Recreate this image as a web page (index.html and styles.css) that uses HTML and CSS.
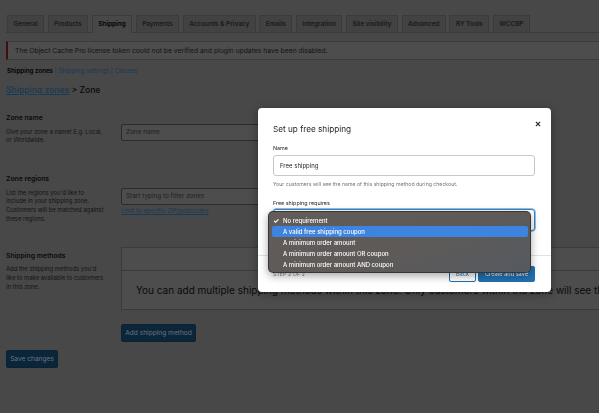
FILE: index.html
```html
<!DOCTYPE html>
<html lang="en">
<head>
<meta charset="utf-8">
<title>Shipping zones</title>
<link rel="stylesheet" href="styles.css">
</head>
<body>
<div class="page">
<div class="wrap">
  <nav class="tabs">
    <a class="tab">General</a>
    <a class="tab">Products</a>
    <a class="tab active">Shipping</a>
    <a class="tab">Payments</a>
    <a class="tab">Accounts &amp; Privacy</a>
    <a class="tab">Emails</a>
    <a class="tab">Integration</a>
    <a class="tab">Site visibility</a>
    <a class="tab">Advanced</a>
    <a class="tab">RY Tools</a>
    <a class="tab">WCCBP</a>
  </nav>

  <div class="notice">The Object Cache Pro license token could not be verified and plugin updates have been disabled.</div>

  <div class="subnav"><b>Shipping zones</b> <span class="sep">|</span> <a>Shipping settings</a> <span class="sep">|</span> <a>Classes</a></div>

  <h2 class="crumbs"><a>Shipping zones</a> &gt; Zone</h2>

  <div class="form">
    <div class="row row-name">
      <div class="th">
        <div class="label">Zone name</div>
        <p class="desc">Give your zone a name! E.g. Local,<br>or Worldwide.</p>
      </div>
      <div class="td">
        <div class="input">Zone name</div>
      </div>
    </div>

    <div class="row row-regions">
      <div class="th">
        <div class="label">Zone regions</div>
        <p class="desc">List the regions you'd like to<br>include in your shipping zone.<br>Customers will be matched against<br>these regions.</p>
      </div>
      <div class="td">
        <div class="input">Start typing to filter zones</div>
        <a class="limit">Limit to specific ZIP/postcodes</a>
      </div>
    </div>

    <div class="row row-methods">
      <div class="th">
        <div class="label">Shipping methods</div>
        <p class="desc">Add the shipping methods you'd<br>like to make available to customers<br>in this zone.</p>
      </div>
      <div class="td">
        <div class="methods">
          <div class="methods-head"></div>
          <div class="methods-body">You can add multiple shipping methods within this zone. Only customers within the zone will see them.</div>
        </div>
        <button class="btn-primary add">Add shipping method</button>
      </div>
    </div>
  </div>

  <button class="btn-primary save">Save changes</button>
</div>
</div>

<div class="modal">
  <header class="modal-head">
    <h1 class="modal-title">Set up free shipping</h1>
    <button class="close" aria-label="Close">
      <svg viewBox="0 0 10 10" width="6" height="6"><path d="M1.5 1.5 L8.5 8.5 M8.5 1.5 L1.5 8.5" stroke="#1e1e1e" stroke-width="1.8" fill="none"/></svg>
    </button>
  </header>
  <div class="modal-body">
    <div class="m-label">Name</div>
    <div class="m-input">Free shipping</div>
    <div class="m-help">Your customers will see the name of this shipping method during checkout.</div>
    <div class="m-label m-label-2">Free shipping requires</div>
    <div class="m-select">
      <ul class="menu">
        <li class="opt checked"><span class="check">✓</span>No requirement</li>
        <li class="opt hl">A valid free shipping coupon</li>
        <li class="opt">A minimum order amount</li>
        <li class="opt">A minimum order amount OR coupon</li>
        <li class="opt">A minimum order amount AND coupon</li>
      </ul>
    </div>
  </div>
  <footer class="modal-foot">
    <span class="step">Step 2 of 2</span>
    <div class="actions">
      <button class="btn-back">Back</button>
      <button class="btn-create">Create and save</button>
    </div>
  </footer>
</div>
</body>
</html>
```

FILE: styles.css
```css
/* The settings page sits behind a 70% black modal backdrop,
   so every page colour below is the dimmed (x0.3) value. */
html, body {
  margin: 0;
  padding: 0;
  background-color: #484848;
}
body {
  font-family: Inter, "Noto Sans", sans-serif;
  color: #090b0c;
}
.page {
  width: 599px;
  height: 413px;
  overflow: hidden;
  background-color: #484848;
}
.wrap {
  width: 660px;
  padding-left: 6px;
  padding-top: 15px;
}

/* tabs */
.tabs {
  display: flex;
  gap: 3.5px;
  border-bottom: 1px solid #3b3b3c;
  height: 17px;
  padding-left: 1px;
}
.tab {
  display: block;
  height: 16px;
  line-height: 16px;
  padding: 0 5.5px;
  background-color: #424243;
  border: 1px solid #3b3b3c;
  border-bottom: none;
  font-size: 6.4px;
  font-weight: 600;
  color: #181a1c;
  white-space: nowrap;
}
.tab.active {
  background-color: #484848;
  color: #000;
  height: 17px;
  margin-bottom: -1px;
}

/* notice */
.notice {
  margin-top: 8px;
  height: 17px;
  line-height: 17px;
  background-color: #4d4d4d;
  border: 1px solid #3b3b3c;
  border-left: 2px solid #401011;
  padding-left: 7px;
  font-size: 6.8px;
  color: #121416;
  white-space: nowrap;
}

.subnav {
  margin-top: 6px;
  line-height: 10px;
  font-size: 6.2px;
  color: #181a1c;
  padding-left: 1px;
}
.subnav b { color: #000; font-weight: 600; }
.subnav a { color: #163a58; }
.subnav .sep { color: #323334; }

.crumbs {
  margin: 8px 0 0;
  font-size: 8.6px;
  line-height: 12px;
  font-weight: 500;
  color: #090b0c;
}
.crumbs a { color: #163a58; text-decoration: underline; }

/* form */
.form { margin-top: 17px; }
.row { display: flex; }
.th { width: 115px; flex: none; }
.td { flex: 1; }
.label {
  font-size: 6.8px;
  font-weight: 600;
  line-height: 10px;
  color: #090b0c;
}
.desc {
  margin: 4.5px 0 0;
  font-size: 5.9px;
  line-height: 8.8px;
  color: #121416;
  white-space: nowrap;
}
.input {
  width: 270px;
  height: 17px;
  box-sizing: border-box;
  background-color: #4d4d4d;
  border: 1px solid #2a2b2c;
  border-radius: 2px;
  padding-left: 4px;
  font-size: 6.4px;
  line-height: 15px;
  color: #1e2022;
}
.row-name .td { padding-top: 11px; }
.row-regions { margin-top: 29px; }
.row-regions .td { padding-top: 14px; }
.limit {
  display: block;
  margin-top: 2px;
  font-size: 6px;
  line-height: 8px;
  color: #163a58;
  text-decoration: underline;
}
.row-methods { margin-top: 23px; }
.row-methods .th { padding-top: 4px; }
.methods {
  background-color: #4d4d4d;
  border: 1px solid #3b3b3c;
}
.methods-head {
  height: 22px;
  border-bottom: 1px solid #3b3b3c;
}
.methods-body {
  height: 38px;
  padding-left: 14px;
  padding-top: 13px;
  box-sizing: border-box;
  font-size: 10px;
  line-height: 12px;
  color: #090b0c;
  white-space: nowrap;
}
.btn-primary {
  display: block;
  height: 18px;
  box-sizing: border-box;
  border: 1px solid #0a2235;
  background-color: #0b2639;
  color: #6a7682;
  border-radius: 2px;
  font-family: inherit;
  font-size: 6.6px;
  padding: 0;
  text-align: center;
  white-space: nowrap;
}
.add { margin-top: 14px; width: 75px; }
.save { margin-top: 8px; width: 52px; }

/* modal */
.modal {
  position: fixed;
  z-index: 101;
  left: 258px;
  top: 108px;
  width: 293px;
  background: #fff;
  border-radius: 4px;
  box-shadow: 0 2px 10px rgba(0, 0, 0, 0.35);
  font-family: Inter, "Noto Sans", sans-serif;
  color: #1e1e1e;
}
.modal-head {
  position: relative;
  padding: 15px 16px 0 15px;
}
.modal-title {
  margin: 0;
  font-size: 8.2px;
  line-height: 12px;
  font-weight: 400;
}
.close {
  position: absolute;
  right: 10px;
  top: 13px;
  width: 6px;
  height: 6px;
  padding: 0;
  border: 0;
  background: none;
  display: flex;
}
.modal-body { padding: 0 16px 0 15px; }
.m-label {
  margin-top: 9px;
  font-size: 5.4px;
  line-height: 8px;
}
.m-label-2 { margin-top: 12px; line-height: 7px; }
.m-input {
  margin-top: 3px;
  height: 21px;
  box-sizing: border-box;
  border: 1px solid #c8c8c8;
  border-radius: 3px;
  padding-left: 6px;
  font-size: 6px;
  line-height: 19px;
}
.m-help {
  margin-top: 4.5px;
  font-size: 5.2px;
  line-height: 7px;
  color: #757575;
}
.m-select {
  position: relative;
  margin-top: 2.5px;
  height: 22px;
  box-sizing: border-box;
  border: 1px solid #3582c4;
  border-radius: 3px;
  box-shadow: 0 0 0 0.5px #3582c4;
}
.menu {
  position: absolute;
  left: -6px;
  top: 1px;
  width: 263px;
  margin: 0;
  padding: 3px 2px 2px 3px;
  box-sizing: border-box;
  list-style: none;
  border-radius: 5px;
  background: linear-gradient(160deg, #625c5a 0%, #5e5a58 55%, #555a61 100%);
  border: 1px solid rgba(30, 30, 30, 0.6);
  box-shadow: 0 3px 8px rgba(0, 0, 0, 0.35);
  z-index: 2;
}
.opt {
  position: relative;
  height: 11px;
  line-height: 11px;
  padding-left: 11px;
  font-size: 6px;
  font-weight: 500;
  color: #fff;
  border-radius: 2px;
  white-space: nowrap;
}
.opt.hl { background: #3d84e0; }
.check {
  position: absolute;
  left: 1px;
  top: 0;
  font-size: 7px;
  font-weight: 700;
}
.modal-foot {
  margin-top: 24px;
  border-top: 1px solid #e2e2e2;
  padding: 10px 16px 10px 15px;
  display: flex;
  justify-content: space-between;
  align-items: center;
}
.step {
  font-size: 5px;
  text-transform: uppercase;
  color: #757575;
  letter-spacing: 0.2px;
}
.actions { display: flex; gap: 2px; }
.btn-back, .btn-create {
  height: 16px;
  box-sizing: border-box;
  border-radius: 2px;
  font-family: inherit;
  font-size: 5.6px;
  padding: 0;
}
.btn-back {
  width: 27px;
  background: #fff;
  border: 1px solid #2271b1;
  color: #2271b1;
}
.btn-create {
  width: 57px;
  background: #2271b1;
  border: 1px solid #2271b1;
  color: #fff;
}
```
